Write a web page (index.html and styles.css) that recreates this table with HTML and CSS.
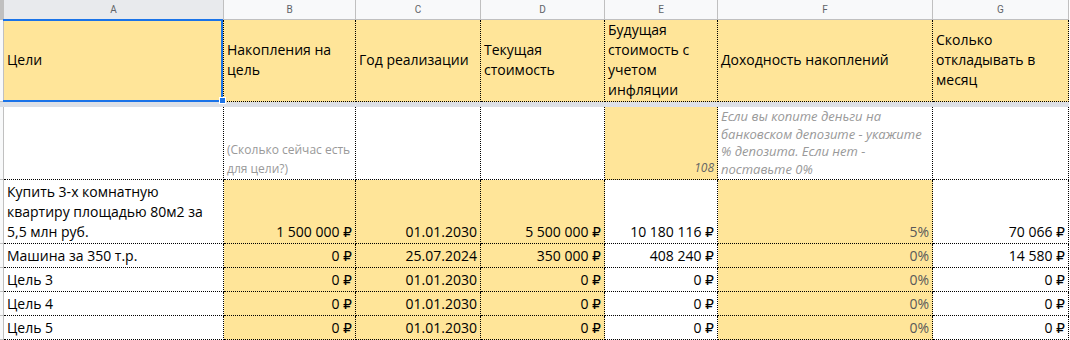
FILE: index.html
```html
<!DOCTYPE html>
<html lang="ru">
<head>
<meta charset="utf-8">
<title>Цели</title>
<link rel="stylesheet" href="styles.css">
</head>
<body>
<div class="sheet">
  <div class="grid">
    <div class="stub corner"></div>
    <div class="colhdr sel">A</div>
    <div class="colhdr">B</div>
    <div class="colhdr">C</div>
    <div class="colhdr">D</div>
    <div class="colhdr">E</div>
    <div class="colhdr">F</div>
    <div class="colhdr">G</div>

    <div class="stub"></div>
    <div class="cell y mid">Цели</div>
    <div class="cell y mid">Накопления на цель</div>
    <div class="cell y mid">Год реализации</div>
    <div class="cell y mid">Текущая стоимость</div>
    <div class="cell y mid">Будущая стоимость с учетом инфляции</div>
    <div class="cell y mid">Доходность накоплений</div>
    <div class="cell y mid">Сколько откладывать в месяц</div>

    <div class="freeze"></div>

    <div class="stub"></div>
    <div class="cell"></div>
    <div class="cell bot hint">(Сколько сейчас есть для цели?)</div>
    <div class="cell"></div>
    <div class="cell"></div>
    <div class="cell y bot right note">108</div>
    <div class="cell top hint it">Если вы копите деньги на банковском депозите - укажите % депозита. Если нет - поставьте 0%</div>
    <div class="cell"></div>

    <div class="stub"></div>
    <div class="cell bot">Купить 3-х комнатную квартиру площадью 80м2 за 5,5 млн руб.</div>
    <div class="cell y bot right">1 500 000 ₽</div>
    <div class="cell y bot right">01.01.2030</div>
    <div class="cell y bot right">5 500 000 ₽</div>
    <div class="cell bot right">10 180 116 ₽</div>
    <div class="cell y bot right pct">5%</div>
    <div class="cell bot right">70 066 ₽</div>

    <div class="stub"></div>
    <div class="cell bot">Машина за 350 т.р.</div>
    <div class="cell y bot right">0 ₽</div>
    <div class="cell y bot right">25.07.2024</div>
    <div class="cell y bot right">350 000 ₽</div>
    <div class="cell bot right">408 240 ₽</div>
    <div class="cell y bot right pct">0%</div>
    <div class="cell bot right">14 580 ₽</div>

    <div class="stub"></div>
    <div class="cell bot">Цель 3</div>
    <div class="cell y bot right">0 ₽</div>
    <div class="cell y bot right">01.01.2030</div>
    <div class="cell y bot right">0 ₽</div>
    <div class="cell bot right">0 ₽</div>
    <div class="cell y bot right pct">0%</div>
    <div class="cell bot right">0 ₽</div>

    <div class="stub"></div>
    <div class="cell bot">Цель 4</div>
    <div class="cell y bot right">0 ₽</div>
    <div class="cell y bot right">01.01.2030</div>
    <div class="cell y bot right">0 ₽</div>
    <div class="cell bot right">0 ₽</div>
    <div class="cell y bot right pct">0%</div>
    <div class="cell bot right">0 ₽</div>

    <div class="stub"></div>
    <div class="cell bot">Цель 5</div>
    <div class="cell y bot right">0 ₽</div>
    <div class="cell y bot right">01.01.2030</div>
    <div class="cell y bot right">0 ₽</div>
    <div class="cell bot right">0 ₽</div>
    <div class="cell y bot right pct">0%</div>
    <div class="cell bot right">0 ₽</div>
  </div>
  <div class="selection"></div>
  <div class="handle"></div>
</div>
</body>
</html>
```

FILE: styles.css
```css
html, body {
  margin: 0;
  padding: 0;
  background: #ffffff;
}

.sheet {
  position: relative;
  width: 1070px;
  height: 340px;
  overflow: hidden;
  font-family: "Open Sans", "DejaVu Sans", sans-serif;
  font-size: 14px;
  color: #000;
}

.grid {
  display: grid;
  grid-template-columns: 4px 220px 132px 125px 124px 113px 215px 136px;
  grid-template-rows: 20px 82px 5px 73px 64px 24px 24px 24px 24px;
}

.stub {
  background: #f8f9fa;
  border-right: 1px solid #c0c0c0;
  border-bottom: 1px solid #c0c0c0;
  box-sizing: border-box;
}

.stub.corner {
  background: #c0c0c0;
}

.colhdr {
  box-sizing: border-box;
  background: #f8f9fa;
  border-right: 1px solid #c0c0c0;
  border-bottom: 1px solid #c0c0c0;
  font-family: Roboto, "Liberation Sans", sans-serif;
  font-size: 10px;
  color: #5f6368;
  display: flex;
  align-items: center;
  justify-content: center;
}

.colhdr.sel {
  background: #e8eaed;
}

.freeze {
  grid-column: 1 / -1;
  background: #dde0e6;
}

.cell {
  box-sizing: border-box;
  border-right: 1px dotted #000;
  border-bottom: 1px dotted #000;
  padding: 0 3px 1px 3px;
  line-height: 20px;
  display: flex;
  flex-direction: column;
  overflow: hidden;
}

.y {
  background: #ffe599;
}

.mid {
  justify-content: center;
}

.bot {
  justify-content: flex-end;
}

.top {
  justify-content: flex-start;
}

.right {
  text-align: right;
}

.hint {
  color: #999999;
  font-size: 12px;
  line-height: 19px;
}

.it {
  font-style: italic;
  font-size: 13px;
  line-height: 17.5px;
  padding-top: 1px;
}

.note {
  font-style: italic;
  color: #666666;
  font-size: 12px;
}

.pct {
  color: #595959;
}

.selection {
  position: absolute;
  left: 3px;
  top: 19px;
  width: 220px;
  height: 83px;
  box-sizing: border-box;
  border: 2px solid #1a73e8;
  border-left: none;
  pointer-events: none;
}

.handle {
  position: absolute;
  left: 219px;
  top: 97px;
  width: 7px;
  height: 7px;
  box-sizing: border-box;
  background: #1a73e8;
  border: 1px solid #ffffff;
}
```
